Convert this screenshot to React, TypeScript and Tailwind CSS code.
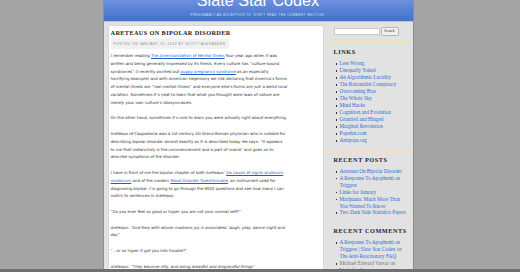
import React from 'react';

const serif = "font-['Liberation_Serif',Georgia,serif]";
const sans = "font-['DejaVu_Sans',Verdana,sans-serif]";

const A = ({ children }: { children: React.ReactNode }) => (
  <a href="#" className="text-[#1d5fcf] underline">
    {children}
  </a>
);

const SideLink = ({ children }: { children: React.ReactNode }) => (
  <a href="#" className="text-[#2a6fd6]">
    {children}
  </a>
);

const Item = ({ children }: { children: React.ReactNode }) => (
  <li className="flex">
    <span className="mt-[3px] mr-[2.5px] ml-[2px] h-[1.5px] w-[1.5px] shrink-0 bg-[#333]" />
    <span>{children}</span>
  </li>
);

const Heading = ({ children }: { children: React.ReactNode }) => (
  <div className={`${serif} text-[6.2px] leading-[8px] font-bold tracking-[0.6px] text-[#222]`}>{children}</div>
);

const Separator = () => <div className="h-px bg-[#f2dcb8]" />;

const links = [
  'Less Wrong',
  'Unequally Yoked',
  'An Algorithmic Lucidity',
  'The Rationalist Conspiracy',
  'Overcoming Bias',
  'The Whole Sky',
  'Mind Hacks',
  'Cognition and Evolution',
  'Gruntled and Hinged',
  'Marginal Revolution',
  'Popehat.com',
  'Antipope.org',
];

const App = () => {
  return (
    <div className="flex h-[272px] w-[520px] flex-col overflow-hidden bg-[#a4a4a4]">
      <div className="flex flex-1 justify-center overflow-hidden">
        <div className="ml-[-4px] flex w-[311px] flex-col border-x border-[#8c8c8c] bg-[#e2e2e2]">
          {/* Header */}
          <div className="flex h-[22px] shrink-0 flex-col items-center overflow-hidden border-b border-[#b9c6e2] bg-gradient-to-b from-[#6c91de] to-[#4270ca]">
            <div className="mt-[-10px] font-['Liberation_Sans',Arial,sans-serif] text-[16.2px] leading-[20px] text-white">
              Slate Star Codex
            </div>
            <div className="mt-[3px] font-['Liberation_Sans',Arial,sans-serif] text-[2.9px] leading-[4px] tracking-[0.55px] text-[#dfe7f7]">
              PRESUMABLY AN EXCEPTION TO “DON’T READ THE COMMENT SECTION”
            </div>
          </div>

          <div className="flex flex-1 overflow-hidden">
            {/* Main post */}
            <div className="mt-[3px] ml-[4px] w-[216px] shrink-0 rounded-t-[2px] border border-b-0 border-[#d6d6d6] bg-white px-[2px] pt-[3px]">
              <div className={`${serif} text-[6.3px] leading-[8px] font-bold tracking-[0.35px] text-[#222]`}>
                ARETEAUS ON BIPOLAR DISORDER
              </div>
              <div className="mt-[2px] w-fit bg-[#f1f1f1] px-[3px] font-['Liberation_Sans',Arial,sans-serif] text-[3.3px] leading-[10px] tracking-[0.55px] text-[#8a8a8a]">
                POSTED ON JANUARY 12, 2014 BY SCOTT ALEXANDER
              </div>
              <div className={`${sans} mt-[3px] text-[3.95px] leading-[7.8px] whitespace-nowrap text-[#333]`}>
                <p className="mb-[7.8px]">
                  I remember reading <A>The Americanization of Mental Illness</A> four year ago when it was
                  <br />
                  written and being generally impressed by its thesis. Every culture has “culture-bound
                  <br />
                  syndromes” (I recently pointed out <A>puppy pregnancy syndrome</A> as an especially
                  <br />
                  horrifying example) and with American hegemony we risk declaring that America’s forms
                  <br />
                  of mental illness are “real mental illness” and everyone else’s forms are just a weird local
                  <br />
                  variation. Sometimes it’s neat to learn that what you thought were laws of nature are
                  <br />
                  merely your own culture’s idiosyncrasies.
                </p>
                <p className="mb-[7.8px]">
                  On the other hand, sometimes it’s nice to learn you were actually right about everything.
                </p>
                <p className="mb-[7.8px]">
                  Areteaus of Cappadocia was a 1st century AD Greco-Roman physician who is notable for
                  <br />
                  describing bipolar disorder almost exactly as it is described today. He says: “It appears
                  <br />
                  to me that melancholy is the commencement and a part of mania” and goes on to
                  <br />
                  describe symptoms of the disorder.
                </p>
                <p className="mb-[7.8px]">
                  I have in front of me the bipolar chapter of both Areteaus’ <A>De causis et signis acutorum</A>
                  <br />
                  <A>morborum</A> and of the modern <A>Mood Disorder Questionnaire</A>, an instrument used for
                  <br />
                  diagnosing bipolar. I’m going to go through the MDQ questions and see how many I can
                  <br />
                  match to sentences in Areteaus:
                </p>
                <p className="mb-[7.8px]">“Do you ever feel so good or hyper you are not your normal self?”</p>
                <p className="mb-[7.8px] italic">
                  Areteaus: “And they with whose madness joy is associated, laugh, play, dance night and
                  <br />
                  day”
                </p>
                <p className="mb-[7.8px]">“…or so hyper it got you into trouble?”</p>
                <p className="mb-[7.8px] italic">Areteaus: “They become silly, and doing dreadful and disgraceful things”</p>
              </div>
            </div>

            {/* Sidebar */}
            <div className="flex-1">
              <div className="mt-[5px] flex items-center pl-[10px]">
                <div className="h-[7px] w-[46px] border border-[#c8c8c8] bg-white" />
                <button className={`${serif} ml-[1px] h-[9px] w-[18px] rounded-[1.5px] border border-[#b4b4b4] bg-[#efefef] text-[3.8px] leading-[7px] text-[#333]`}>
                  Search
                </button>
              </div>
              <div className="mt-[6px]">
                <Separator />
              </div>

              <div className={`${serif} pt-[5px] pl-[10px] text-[5.2px] text-[#333]`}>
                <Heading>LINKS</Heading>
                <ul className="mt-[4px] mb-[6px] leading-[7px]">
                  {links.map((l) => (
                    <Item key={l}>
                      <SideLink>{l}</SideLink>
                    </Item>
                  ))}
                </ul>
              </div>
              <Separator />

              <div className={`${serif} pt-[5px] pl-[10px] text-[5.2px] text-[#333]`}>
                <Heading>RECENT POSTS</Heading>
                <ul className="mt-[4px] mb-[5px] w-[74px] leading-[6.9px]">
                  <Item>
                    <SideLink>Areteaus On Bipolar Disorder</SideLink>
                  </Item>
                  <Item>
                    <SideLink>A Response To Apophemi on Triggers</SideLink>
                  </Item>
                  <Item>
                    <SideLink>Links for January</SideLink>
                  </Item>
                  <Item>
                    <SideLink>Marijuana: Much More Than You Wanted To Know</SideLink>
                  </Item>
                  <Item>
                    <SideLink>Two Dark Side Statistics Papers</SideLink>
                  </Item>
                </ul>
              </div>
              <Separator />

              <div className={`${serif} pt-[5px] pl-[10px] text-[5.2px] text-[#777]`}>
                <Heading>RECENT COMMENTS</Heading>
                <ul className="mt-[4px] w-[74px] leading-[6.9px]">
                  <Item>
                    <SideLink>A Response To Apophemi on Triggers | Slate Star Codex</SideLink> on{' '}
                    <SideLink>The Anti-Reactionary FAQ</SideLink>
                  </Item>
                  <Item>
                    Michael Edward Vassar on <SideLink>Links for January</SideLink>
                  </Item>
                </ul>
              </div>
            </div>
          </div>
        </div>
      </div>
      <div className="h-[3px] shrink-0 bg-[#707070]" />
    </div>
  );
};

export default App;
